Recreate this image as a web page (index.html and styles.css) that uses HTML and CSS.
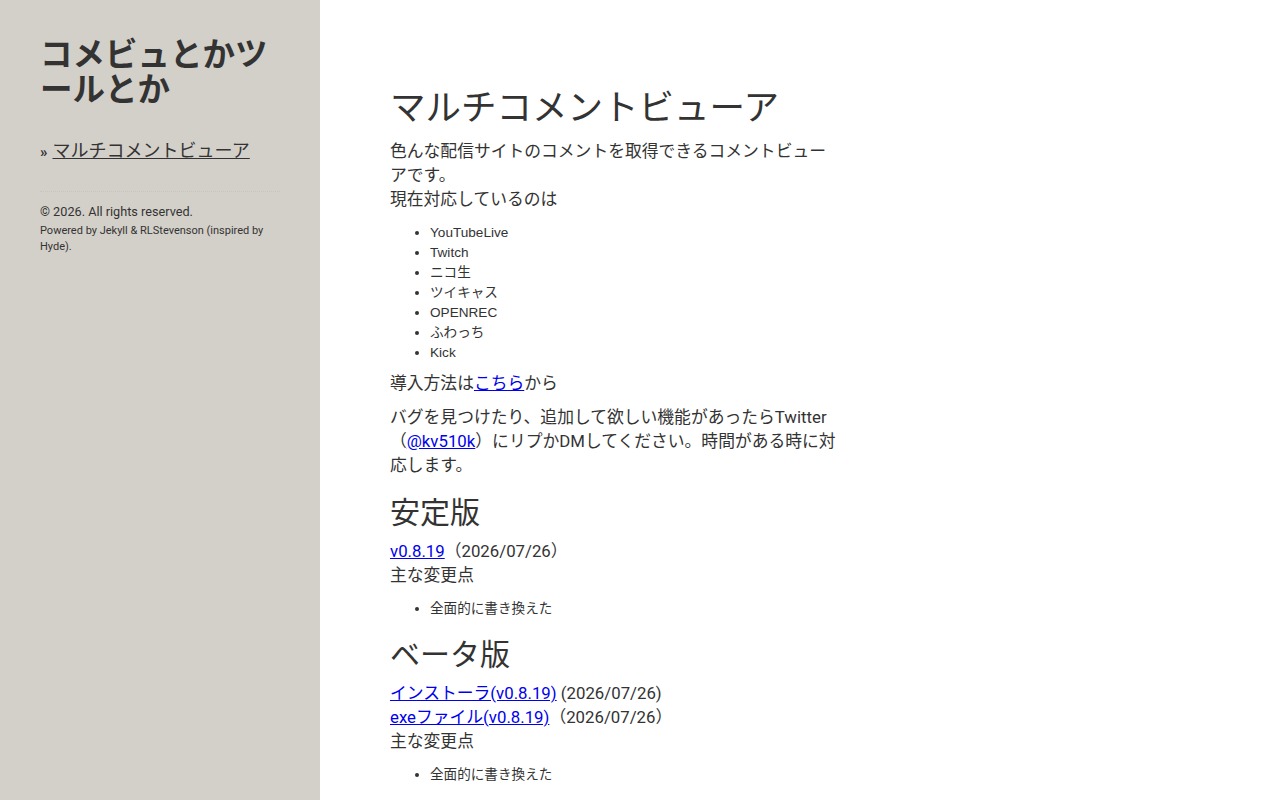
FILE: index.html
```html
<!DOCTYPE html>
<html lang="ja">
<head>
<meta charset="utf-8">
<title>マルチコメントビューア | コメビュとかツールとか</title>
<link rel="stylesheet" href="styles.css">
</head>
<body>
<div class="layout">
  <aside class="sidebar">
    <h1 class="site-title">コメビュとかツールとか</h1>
    <nav class="site-nav">
      <span class="raquo">»</span><a href="#">マルチコメントビューア</a>
    </nav>
    <footer class="site-footer">
      <p class="copyright">© 2026. All rights reserved.</p>
      <p class="powered">Powered by <a href="#">Jekyll</a> &amp; <a href="#">RLStevenson</a> (inspired by Hyde).</p>
    </footer>
  </aside>
  <main class="content">
    <h1 class="page-title">マルチコメントビューア</h1>
    <p>色んな配信サイトのコメントを取得できるコメントビューアです。<br>現在対応しているのは</p>
    <ul class="list">
      <li>YouTubeLive</li>
      <li>Twitch</li>
      <li>ニコ生</li>
      <li>ツイキャス</li>
      <li>OPENREC</li>
      <li>ふわっち</li>
      <li>Kick</li>
    </ul>
    <p>導入方法は<a href="#">こちら</a>から</p>
    <p>バグを見つけたり、追加して欲しい機能があったらTwitter（<a href="#">@kv510k</a>）にリプかDMしてください。時間がある時に対応します。</p>
    <h2>安定版</h2>
    <p><a href="#">v0.8.19</a>（2026/07/26）<br>主な変更点</p>
    <ul class="list">
      <li>全面的に書き換えた</li>
    </ul>
    <h2>ベータ版</h2>
    <p><a href="#">インストーラ(v0.8.19)</a> (2026/07/26)<br><a href="#">exeファイル(v0.8.19)</a>（2026/07/26）<br>主な変更点</p>
    <ul class="list">
      <li>全面的に書き換えた</li>
    </ul>
  </main>
</div>
</body>
</html>
```

FILE: styles.css
```css
html, body {
  margin: 0;
  padding: 0;
}

body {
  font-family: Roboto, "Noto Sans CJK JP", sans-serif;
  color: #333;
  background: #fff;
  font-size: 16.8px;
  line-height: 24px;
}

.layout {
  display: flex;
  min-height: 100vh;
}

.sidebar {
  flex: 0 0 320px;
  width: 320px;
  box-sizing: border-box;
  min-height: 100vh;
  background: #d3d0c9;
  padding: 38px 40px;
  color: #333;
}

.site-title {
  margin: 0;
  font-size: 32.5px;
  line-height: 35px;
  font-weight: 700;
  color: #333;
}

.site-nav {
  margin-top: 29px;
  font-size: 18px;
  line-height: 27px;
}

.site-nav .raquo {
  font-size: 15px;
  font-weight: 700;
  margin-right: 5px;
}

.site-nav a {
  color: #333;
  text-decoration: underline;
}

.site-footer {
  margin-top: 25px;
  border-top: 1px dotted #c8c5be;
  padding-top: 11px;
}

.copyright {
  margin: 0;
  font-size: 12.7px;
  line-height: 18px;
}

.powered {
  margin: 2px 0 0;
  font-size: 11px;
  line-height: 16px;
}

.powered a {
  color: #333;
  text-decoration: none;
}

.content {
  width: 452px;
  padding: 86px 0 40px 70px;
}

.page-title {
  margin: 0 0 8px;
  font-size: 35.5px;
  line-height: 45px;
  font-weight: 400;
}

.content p {
  margin: 0 0 10px;
}

.content a {
  color: #0000ee;
}

.content h2 {
  margin: 17px 0 8px;
  font-size: 30px;
  line-height: 37px;
  font-weight: 400;
}

.list {
  margin: 12px 0 8px;
  padding-left: 40px;
  font-family: "Liberation Sans", "Noto Sans CJK JP", sans-serif;
  font-size: 13.6px;
  line-height: 20px;
}
```
